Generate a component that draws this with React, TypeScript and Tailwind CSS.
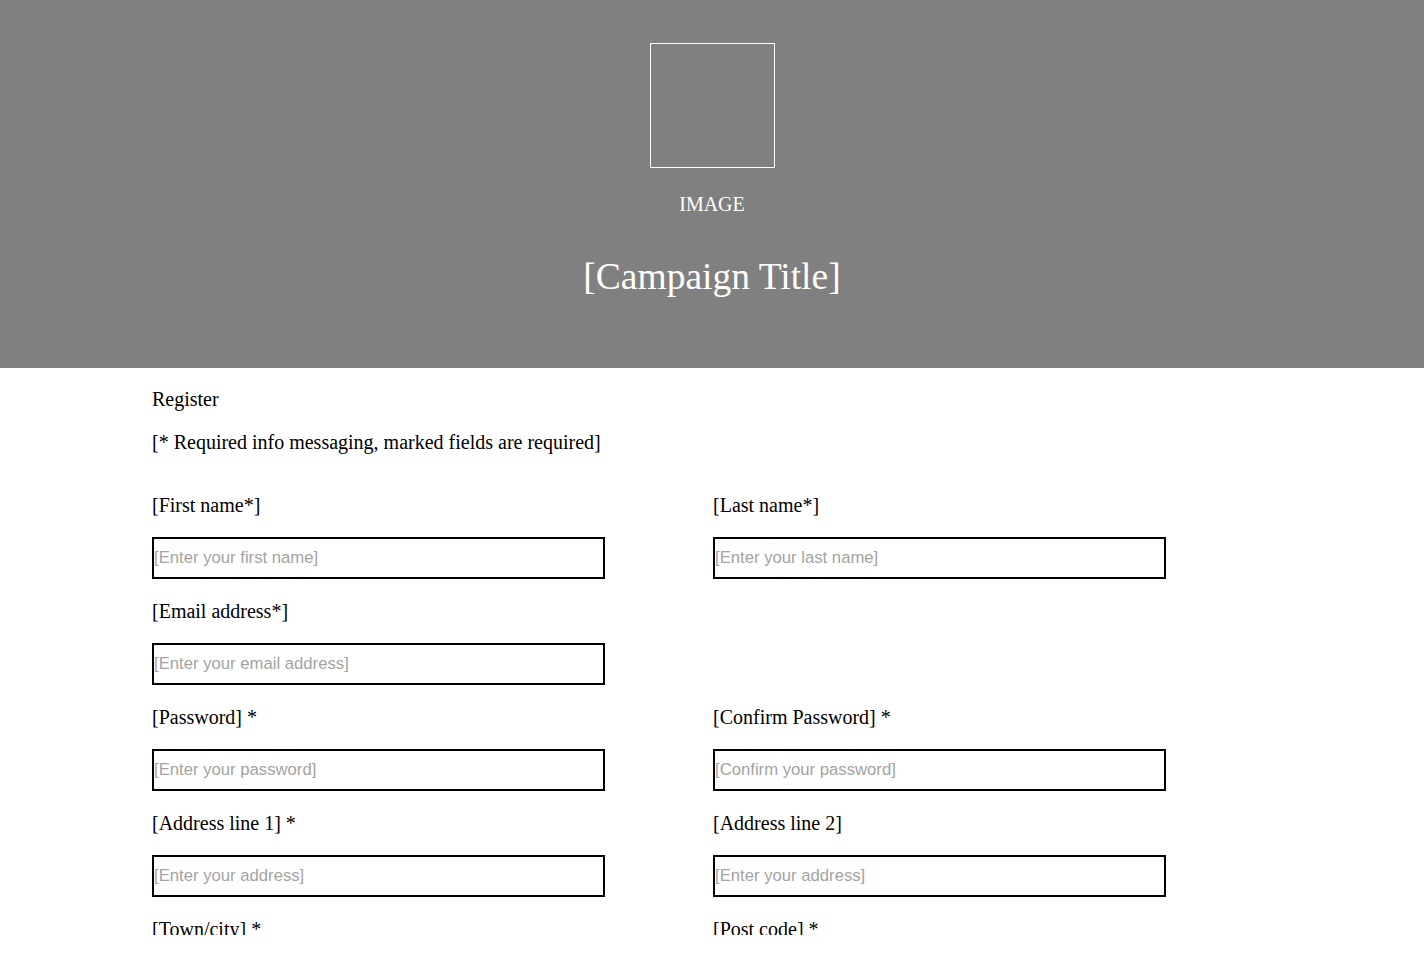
import React from "react";

type Field = { label: string; placeholder: string; type?: string };

const rows: (Field | null)[][] = [
  [
    { label: "[First name*]", placeholder: "[Enter your first name]" },
    { label: "[Last name*]", placeholder: "[Enter your last name]" },
  ],
  [{ label: "[Email address*]", placeholder: "[Enter your email address]", type: "email" }, null],
  [
    { label: "[Password] *", placeholder: "[Enter your password]", type: "password" },
    { label: "[Confirm Password] *", placeholder: "[Confirm your password]", type: "password" },
  ],
  [
    { label: "[Address line 1] *", placeholder: "[Enter your address]" },
    { label: "[Address line 2]", placeholder: "[Enter your address]" },
  ],
  [
    { label: "[Town/city] *", placeholder: "[Enter your town or city]" },
    { label: "[Post code] *", placeholder: "[Enter your post code]" },
  ],
];

const FormField = ({ field }: { field: Field | null }) => {
  if (!field) return <div />;
  return (
    <div className="flex flex-col">
      <label className="text-[20px] leading-[23px] text-black">{field.label}</label>
      <input
        type={field.type ?? "text"}
        placeholder={field.placeholder}
        className="mb-[21px] mt-5 h-[42px] w-[453px] border-2 border-black bg-white px-0 font-['Liberation_Sans',Arial,sans-serif] text-[16.7px] outline-none placeholder:text-[#a3a3a3]"
      />
    </div>
  );
};

export default function App() {
  return (
    <div className="h-[935px] overflow-hidden bg-white font-['Liberation_Serif','Times_New_Roman',serif]">
      <header className="flex h-[368px] flex-col items-center bg-[#808080] pt-[43px] text-white">
        <div className="h-[125px] w-[125px] border border-white" />
        <p className="mt-[25px] text-[20px] leading-[23px]">IMAGE</p>
        <h1 className="mt-[39px] text-[37.5px] leading-[43px]">[Campaign Title]</h1>
      </header>
      <main className="pl-[152px] pt-5">
        <p className="text-[20px] leading-[23px] text-black">Register</p>
        <p className="mt-5 text-[20px] leading-[23px] text-black">[* Required info messaging, marked fields are required]</p>
        <form className="mt-10">
          {rows.map((row, i) => (
            <div key={i} className="grid grid-cols-[561px_453px]">
              {row.map((f, j) => (
                <FormField key={j} field={f} />
              ))}
            </div>
          ))}
        </form>
      </main>
    </div>
  );
}
